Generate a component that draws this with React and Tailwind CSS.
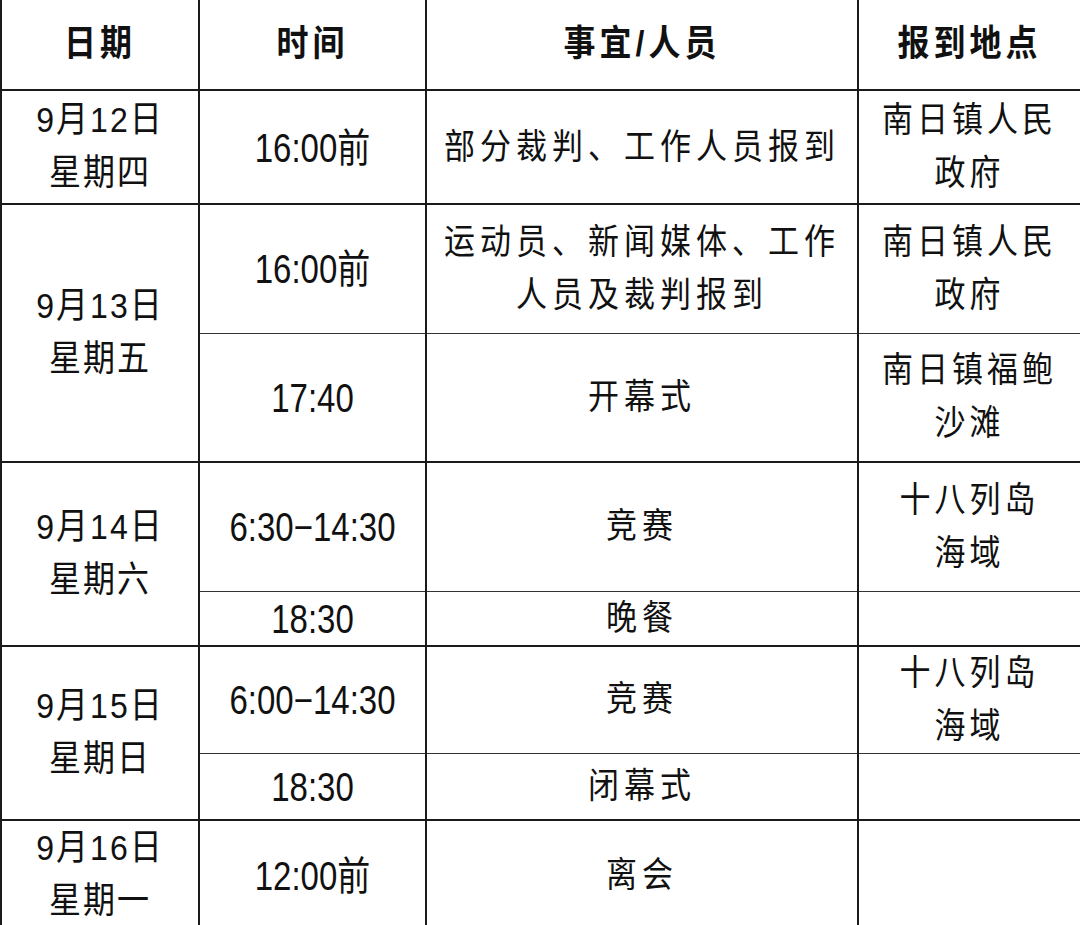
import React from 'react';

const groups = [
	{
		date: ['9月12日', '星期四'],
		rows: [{ h: 'h-[114px]', time: '16:00前', item: ['部分裁判、工作人员报到'], place: ['南日镇人民', '政府'] }],
	},
	{
		date: ['9月13日', '星期五'],
		rows: [
			{ h: 'h-[129px]', time: '16:00前', item: ['运动员、新闻媒体、工作', '人员及裁判报到'], place: ['南日镇人民', '政府'] },
			{ h: 'h-[129px]', time: '17:40', item: ['开幕式'], place: ['南日镇福鲍', '沙滩'] },
		],
	},
	{
		date: ['9月14日', '星期六'],
		rows: [
			{ h: 'h-[129px]', time: '6:30−14:30', item: ['竞赛'], place: ['十八列岛', '海域'] },
			{ h: 'h-[50px]', time: '18:30', item: ['晚餐'], place: [] },
		],
	},
	{
		date: ['9月15日', '星期日'],
		rows: [
			{ h: 'h-[107px]', time: '6:00−14:30', item: ['竞赛'], place: ['十八列岛', '海域'] },
			{ h: 'h-[67px]', time: '18:30', item: ['闭幕式'], place: [] },
		],
	},
	{
		date: ['9月16日', '星期一'],
		rows: [{ h: 'h-[110px]', time: '12:00前', item: ['离会'], place: [] }],
	},
];

function Lines({ lines, tall }) {
	return (
		<div className="flex flex-col items-center leading-[53px]">
			{lines.map((l) => (
				<span
					key={l}
					className={'inline-block whitespace-nowrap ' + (tall ? 'scale-y-[1.22]' : 'scale-y-[1.12]')}
				>
					{l}
				</span>
			))}
		</div>
	);
}

function cellBorders(i, n) {
	return (
		'border-x-2 border-[#1a1a1a] ' +
		(i === 0 ? 'border-t-2 ' : 'border-t-[1.5px] border-t-[#333] ') +
		(i === n - 1 ? 'border-b-2' : 'border-b-[1.5px] border-b-[#333]')
	);
}

export default function App() {
	return (
		<div
			className="w-[1080px] h-[925px] overflow-hidden bg-white text-[#111]"
			style={{ fontFamily: '"Liberation Sans", "Noto Sans CJK SC", sans-serif' }}
		>
			<table className="w-[1080px] table-fixed border-collapse text-center">
				<colgroup>
					<col className="w-[198px]" />
					<col className="w-[227px]" />
					<col className="w-[432px]" />
					<col className="w-[223px]" />
				</colgroup>
				<thead>
					<tr className="h-[90px] text-[32px] font-bold tracking-[4px]">
						<th className="border-2 border-t-0 border-[#1a1a1a]">
							<Lines lines={['日期']} />
						</th>
						<th className="border-2 border-t-0 border-[#1a1a1a]">
							<Lines lines={['时间']} />
						</th>
						<th className="border-2 border-t-0 border-[#1a1a1a]">
							<Lines lines={['事宜/人员']} />
						</th>
						<th className="border-2 border-t-0 border-[#1a1a1a]">
							<Lines lines={['报到地点']} />
						</th>
					</tr>
				</thead>
				<tbody>
					{groups.map((g) =>
						g.rows.map((r, i) => (
							<tr key={g.date[0] + i} className={r.h}>
								{i === 0 && (
									<td
										rowSpan={g.rows.length}
										className="border-2 border-[#1a1a1a] align-middle text-[32px] tracking-[2px]"
									>
										<Lines lines={g.date} />
									</td>
								)}
								<td className={cellBorders(i, g.rows.length) + ' text-[33px]'}>
									<Lines lines={[r.time]} tall />
								</td>
								<td className={cellBorders(i, g.rows.length) + ' text-[31px] tracking-[5px]'}>
									<Lines lines={r.item} />
								</td>
								<td className={cellBorders(i, g.rows.length) + ' text-[31px] tracking-[4px]'}>
									<Lines lines={r.place} />
								</td>
							</tr>
						))
					)}
				</tbody>
			</table>
		</div>
	);
}
